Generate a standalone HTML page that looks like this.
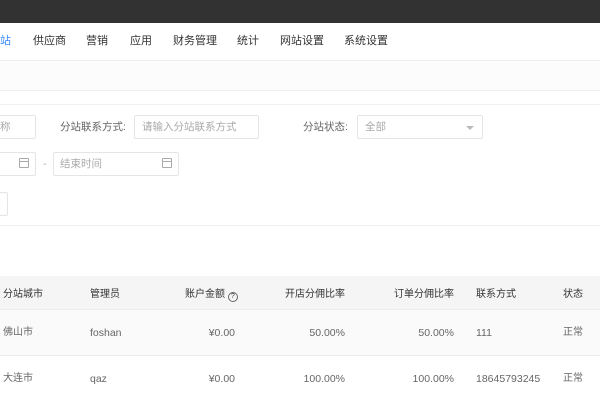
<!DOCTYPE html>
<html><head><meta charset="utf-8"><style>
*{margin:0;padding:0;box-sizing:border-box}
body{width:600px;height:400px;overflow:hidden;background:#fff;font-family:"Liberation Sans","Noto Sans CJK SC",sans-serif;font-size:10px;color:#333;position:relative}
.a{position:absolute;white-space:nowrap;line-height:14px}
.n{font-size:11px}
.f{font-size:10.5px}
.d{font-size:10.5px}
.hl{position:absolute;left:0;width:600px;height:1px;background:#f0f0f0}
.box{position:absolute;border:1px solid #e5e5e5;border-radius:2px;background:#fff}
.ph{color:#aaa}
.cal{position:absolute;width:10px;height:10px;border:1px solid #aaa;border-radius:1px}
.cal:after{content:"";position:absolute;left:0;right:0;top:2px;height:1px;background:#aaa}
.g{color:#666}
</style></head><body>
<div class="a" style="left:0;top:0;width:600px;height:23px;background:#323232"></div>
<div class="a n" style="left:0;top:34px;color:#3388ff">站</div>
<div class="a n" style="left:33px;top:34px">供应商</div>
<div class="a n" style="left:86px;top:34px">营销</div>
<div class="a n" style="left:130px;top:34px">应用</div>
<div class="a n" style="left:173px;top:34px">财务管理</div>
<div class="a n" style="left:237px;top:34px">统计</div>
<div class="a n" style="left:280px;top:34px">网站设置</div>
<div class="a n" style="left:344px;top:34px">系统设置</div>
<div class="hl" style="top:60px"></div>
<div class="a" style="left:0;top:61px;width:600px;height:29px;background:#fcfcfc"></div>
<div class="hl" style="top:90px"></div>
<div class="hl" style="top:104px"></div>
<div class="box" style="left:-10px;top:115px;width:46px;height:24px"></div>
<div class="a ph f" style="left:0;top:120px">称</div>
<div class="a g f" style="left:60px;top:120px">分站联系方式:</div>
<div class="box" style="left:134px;top:115px;width:125px;height:24px"></div>
<div class="a ph f" style="left:142px;top:120px">请输入分站联系方式</div>
<div class="a g f" style="left:303px;top:120px">分站状态:</div>
<div class="box" style="left:357px;top:115px;width:126px;height:24px"></div>
<div class="a ph f" style="left:365px;top:120px">全部</div>
<div class="a" style="left:466px;top:126px;width:0;height:0;border-left:4px solid transparent;border-right:4px solid transparent;border-top:4px solid #bbb"></div>
<div class="box" style="left:-10px;top:152px;width:46px;height:24px"></div>
<div class="cal" style="left:19px;top:158px"></div>
<div class="a ph f" style="left:43px;top:157px">-</div>
<div class="box" style="left:53px;top:152px;width:126px;height:24px"></div>
<div class="a ph f" style="left:60px;top:157px">结束时间</div>
<div class="cal" style="left:162px;top:158px"></div>
<div class="box" style="left:-10px;top:192px;width:18px;height:24px"></div>
<div class="hl" style="top:225px"></div>
<div class="a" style="left:0;top:276px;width:600px;height:34px;background:#f5f5f5;border-bottom:1px solid #ebebeb"></div>
<div class="a" style="left:0;top:310px;width:600px;height:46px;background:#fafafa;border-bottom:1px solid #ebebeb"></div>
<div class="a" style="left:3px;top:288px">分站城市</div>
<div class="a" style="left:90px;top:288px">管理员</div>
<div class="a" style="left:185px;top:288px">账户金额 <span style="display:inline-block;width:10px;height:10px;border:1px solid #666;border-radius:50%;font-size:7px;line-height:8px;text-align:center;vertical-align:-1px">?</span></div>
<div class="a" style="right:255px;top:288px">开店分佣比率</div>
<div class="a" style="right:146px;top:288px">订单分佣比率</div>
<div class="a" style="left:476px;top:288px">联系方式</div>
<div class="a" style="left:563px;top:288px">状态</div>
<div class="a g" style="left:3px;top:326px">佛山市</div>
<div class="a g d" style="left:90px;top:326px">foshan</div>
<div class="a g d" style="right:365px;top:326px">¥0.00</div>
<div class="a g d" style="right:255px;top:326px">50.00%</div>
<div class="a g d" style="right:146px;top:326px">50.00%</div>
<div class="a g d" style="left:476px;top:326px">111</div>
<div class="a g" style="left:563px;top:326px">正常</div>
<div class="a g" style="left:3px;top:372px">大连市</div>
<div class="a g d" style="left:90px;top:372px">qaz</div>
<div class="a g d" style="right:365px;top:372px">¥0.00</div>
<div class="a g d" style="right:255px;top:372px">100.00%</div>
<div class="a g d" style="right:146px;top:372px">100.00%</div>
<div class="a g d" style="left:476px;top:372px">18645793245</div>
<div class="a g" style="left:563px;top:372px">正常</div>
</body></html>
